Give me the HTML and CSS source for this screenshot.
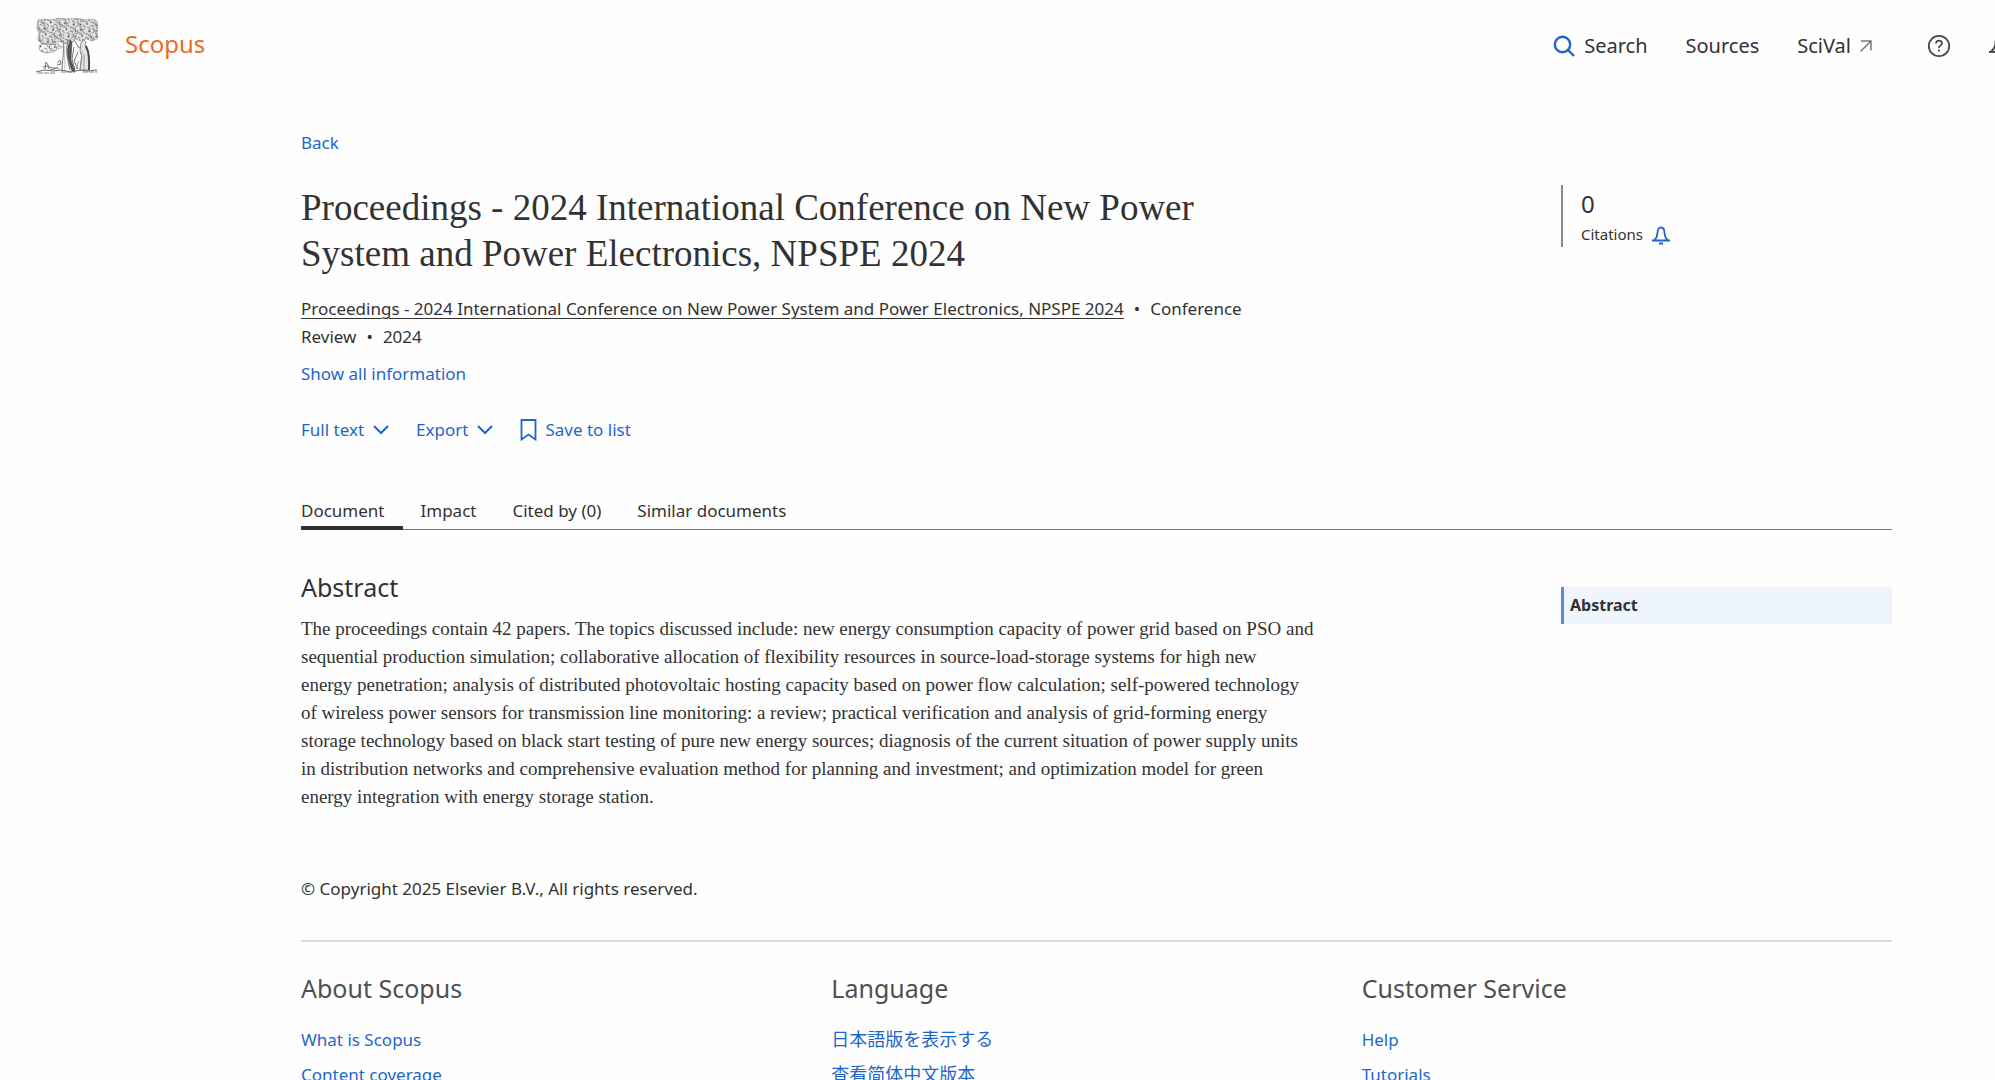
FILE: index.html
```
<!DOCTYPE html>
<html lang="en">
<head>
<meta charset="utf-8">
<meta name="viewport" content="width=device-width, initial-scale=1">
<title>Scopus - Document details</title>
<link rel="stylesheet" href="styles.css">
</head>
<body>
<header class="topbar">
  <a class="brand" href="#">
    <svg class="brand-tree" viewBox="0 0 62 56" fill="none" stroke="#4a4a4a" aria-hidden="true">
      <defs>
        <pattern id="leaves" width="17" height="13" patternUnits="userSpaceOnUse" patternTransform="rotate(23)">
          <path d="M0 2q2-2 3 0t-1 3M5 1q3-1 3 1t-2 3M1 9q1-3 3-1t3 0M9 4q2-2 3 1t3-1M5 6l2 2M2 12q2-2 4 0M12 1q2 0 3 2M9 8q0 3 3 2t3 1M15 7l2 1M8 12l2-1M13 6l1 2" stroke="#666" stroke-width=".9"/>
          <path d="M3 4l1 1M7 10l1-1M11 6l1 1M15 11l1 1M9 1l1 1" stroke="#333" stroke-width="1.2"/>
        </pattern>
      </defs>
      <path d="M2 2l6-1 7 1 8-2 8 1 9-1 9 2 7-1 5 2 1 6-1 5 1 6-5 3-7-2-6 2-5-2-6 2-3 3-3-2-6 0-5 3-4-2-6 1-4-4 1-6-2-6z" fill="#e2e2e2" stroke="none"/>
      <path d="M2 2l6-1 7 1 8-2 8 1 9-1 9 2 7-1 5 2 1 6-1 5 1 6-5 3-7-2-6 2-5-2-6 2-3 3-3-2-6 0-5 3-4-2-6 1-4-4 1-6-2-6z" fill="url(#leaves)" stroke="#777" stroke-width=".7" stroke-dasharray="2 1"/>
      <path d="M3 28l4-3 7 2 8-1 4 3-4 2-5 3-7 1-6-2z" fill="url(#leaves)" stroke="#777" stroke-width=".6"/>
      <path d="M27 22q1 8 0 17t-1 14M32 22q-2 8-1 15t3 15" stroke="#666" stroke-width=".9"/>
      <path d="M29 25q-1 12 0 27M22 27l4 4" stroke="#aaa" stroke-width=".7"/>
      <path d="M34 22q-4 9-2 18t4 13l3 0-4-11 1-18z" fill="#555" stroke-width=".5"/>
      <path d="M36 24q3-3 4 1l3 5 3-1M38 29l-2 12 3 11M42 34l-4 9 4 8" stroke="#666" stroke-width=".9"/>
      <path d="M45 25q2-5 5-1l-1 4 3 7 1 17h-9l2-13-2-6z" fill="#e4e4e4" stroke="#777" stroke-width=".8"/>
      <path d="M50 28q4 7 3 24" stroke="#444" stroke-width="1.800"/>
      <path d="M46 33l-2 18M48 36l0 16M43 43l-3 8" stroke="#888" stroke-width=".8"/>
      <path d="M21 45l3-3 1 4-4 1M9 51l1-7 2 3 1 4M7 49l4-1 5 2 7 0M14 52l7-2" stroke="#666" stroke-width=".9"/>
      <path d="M0 54l8-2 9 1 8-1 10 2 9-2 8 1 9-1" stroke="#666" stroke-width="1"/>
      <path d="M2 55h17M25 54h14M47 54h14" stroke="#777" stroke-width=".9" stroke-dasharray="5 1"/>
    </svg>
    <span>Scopus</span>
  </a>
  <nav class="topnav" aria-label="Main">
    <a href="#" class="nav-search">
      <svg viewBox="0 0 22 22" width="22" height="22" fill="none" stroke="#1f66cc" stroke-width="2.400" aria-hidden="true"><circle cx="9.500" cy="9.500" r="7.700"/><path d="M15 15l6 6"/></svg>
      Search</a>
    <a href="#">Sources</a>
    <a href="#" class="nav-ext">SciVal
      <svg viewBox="0 0 14 14" width="14" height="14" fill="none" stroke="#777" stroke-width="1.500" aria-hidden="true"><path d="M2 2h10v9.500M12 2L1.500 12.500"/></svg></a>
    <button type="button" class="icon-btn help" aria-label="Help">
      <svg viewBox="0 0 24 24" width="24" height="24" fill="none" stroke="#4a4a4a" stroke-width="1.800" aria-hidden="true"><circle cx="12" cy="12" r="10.200"/><path d="M9 9.600q0-3 3-3t3 2.700q0 1.500-1.700 2.500t-1.300 2.200M12 15.500v2"/></svg>
    </button>
    <button type="button" class="icon-btn" aria-label="Notifications">
      <svg viewBox="0 0 24 24" width="24" height="24" fill="none" stroke="#4a4a4a" stroke-width="2" aria-hidden="true"><path d="M0 18h24M2 17.500q4-3 4.500-8 0-6 5.500-6t5.500 6q.5 5 4.500 8M10 21h4"/></svg>
    </button>
  </nav>
</header>

<main class="page">
  <a class="back" href="#">Back</a>

  <section class="split">
    <div class="headline">
      <h1>Proceedings - 2024 International Conference on New Power System and Power Electronics, NPSPE 2024</h1>
      <p class="meta"><a href="#">Proceedings - 2024 International Conference on New Power System and Power Electronics, NPSPE 2024</a><span class="dot">•</span>Conference Review<span class="dot">•</span>2024</p>
      <button type="button" class="link-btn">Show all information</button>
    </div>
    <aside class="metric">
      <span class="metric-value">0</span>
      <span class="metric-label">Citations
        <button type="button" class="icon-btn" aria-label="Set citation alert">
          <svg viewBox="0 0 20 20" width="20" height="20" fill="none" stroke="#1f66cc" stroke-width="1.800" aria-hidden="true"><path d="M1 15.500h18M3.500 15q2.500-2 3-7 0-5.500 3.500-5.500t3.500 5.500q.5 5 3 7M8 18.500h4"/></svg>
        </button>
      </span>
    </aside>
  </section>

  <div class="actions">
    <button type="button" class="link-btn">Full text
      <svg viewBox="0 0 16 10" width="16" height="10" fill="none" stroke="currentColor" stroke-width="2" aria-hidden="true"><path d="M1 1l7 7 7-7"/></svg></button>
    <button type="button" class="link-btn">Export
      <svg viewBox="0 0 16 10" width="16" height="10" fill="none" stroke="currentColor" stroke-width="2" aria-hidden="true"><path d="M1 1l7 7 7-7"/></svg></button>
    <button type="button" class="link-btn save">
      <svg viewBox="0 0 17 22" width="17" height="22" fill="none" stroke="currentColor" stroke-width="1.800" aria-hidden="true"><path d="M1.500 1h14v19.500l-7-5-7 5z"/></svg>
      Save to list</button>
  </div>

  <nav class="tabs" aria-label="Document sections">
    <a href="#" class="active" aria-current="page">Document</a>
    <a href="#">Impact</a>
    <a href="#">Cited by (0)</a>
    <a href="#">Similar documents</a>
  </nav>

  <section class="split body">
    <div>
      <h2>Abstract</h2>
      <p class="abstract">The proceedings contain 42 papers. The topics discussed include: new energy consumption capacity of power grid based on PSO and<br>
        sequential production simulation; collaborative allocation of flexibility resources in source-load-storage systems for high new<br>
        energy penetration; analysis of distributed photovoltaic hosting capacity based on power flow calculation; self-powered technology<br>
        of wireless power sensors for transmission line monitoring: a review; practical verification and analysis of grid-forming energy<br>
        storage technology based on black start testing of pure new energy sources; diagnosis of the current situation of power supply units<br>
        in distribution networks and comprehensive evaluation method for planning and investment; and optimization model for green<br>
        energy integration with energy storage station.</p>
    </div>
    <nav class="toc" aria-label="On this page"><a href="#">Abstract</a></nav>
  </section>

  <p class="copyright">© Copyright 2025 Elsevier B.V., All rights reserved.</p>

  <footer class="footer">
    <section>
      <h2>About Scopus</h2>
      <ul><li><a href="#">What is Scopus</a></li><li><a href="#">Content coverage</a></li></ul>
    </section>
    <section>
      <h2>Language</h2>
      <ul class="languages"><li><a href="#" lang="ja">日本語版を表示する</a></li><li><a href="#" lang="zh-Hans">查看简体中文版本</a></li></ul>
    </section>
    <section>
      <h2>Customer Service</h2>
      <ul><li><a href="#">Help</a></li><li><a href="#">Tutorials</a></li></ul>
    </section>
  </footer>
</main>
</body>
</html>
```
FILE: styles.css
```
:root {
  --ink: #323232;
  --soft: #505050;
  --link: #1f66cc;
  --sans: "Noto Sans", "Noto Sans CJK JP", sans-serif;
  --serif: "Liberation Serif", serif;
}

* { box-sizing: border-box; }

body {
  margin: 0;
  background: #fefefe;
  color: var(--ink);
  font: 17px/28px var(--sans);
}

a { color: var(--link); text-decoration: none; }
h1, h2, p, ul { margin: 0; padding: 0; font-weight: 400; }
ul { list-style: none; }
svg { display: block; flex: none; }

button {
  padding: 0;
  border: 0;
  background: none;
  color: inherit;
  font: inherit;
  cursor: pointer;
}

.topbar {
  display: flex;
  justify-content: space-between;
  align-items: center;
  height: 92px;
  padding-left: 36px;
  overflow: hidden;
}

.brand {
  display: flex;
  align-items: center;
  gap: 27px;
  color: #eb6b1f;
  font-size: 24px;
}
.brand span { padding-bottom: 4px; }
.brand-tree { width: 62px; height: 56px; }

.topnav {
  display: flex;
  align-items: center;
  gap: 38px;
  margin-right: -18px;
  font-size: 20px;
}
.topnav a { display: flex; align-items: center; color: var(--ink); }
.nav-search { gap: 9px; }
.nav-ext { gap: 8px; }
.topnav .help { margin-left: 16px; }

.page { padding: 37px 103px 0 301px; }

.back { display: block; }

.split {
  display: grid;
  grid-template-columns: minmax(0, 1fr) 331px;
}

.headline { max-width: 960px; padding-top: 28px; }
h1 {
  font: 37px/46px var(--serif);
}
.meta { margin-top: 18px; }
.meta a {
  color: inherit;
  text-decoration: underline 1px;
  text-underline-offset: 3px;
}
.dot { margin: 0 10px; }

.link-btn {
  display: flex;
  align-items: center;
  gap: 9px;
  color: var(--link);
}
.headline .link-btn { margin-top: 9px; }

.metric {
  display: flex;
  flex-direction: column;
  align-self: start;
  margin-top: 28px;
  padding-left: 18px;
  border-left: 2px solid #8c8c8c;
}
.metric-value { font-size: 24px; line-height: 37px; }
.metric-label {
  display: flex;
  align-items: center;
  gap: 8px;
  font-size: 15px;
  line-height: 25px;
}

.actions {
  display: flex;
  gap: 27px;
  margin-top: 28px;
}
.save { gap: 8px; }

.tabs {
  display: flex;
  margin-top: 48px;
  border-bottom: 1px solid #777;
}
.tabs a {
  margin-bottom: -1px;
  padding: 5px 18px 1px;
  border-bottom: 4px solid transparent;
  color: var(--ink);
}
.tabs a:first-child { padding-left: 0; }
.tabs .active { border-color: #2e2e2e; }

.body { padding-top: 39px; }
h2 { font-size: 25px; line-height: 36px; }
.abstract {
  margin-top: 10px;
  font: 19px/28px var(--serif);
}

.toc { padding-top: 18px; }
.toc a {
  display: block;
  padding: 4px 6px 5px;
  border-left: 3px solid #5b8bd9;
  background: #eff5fd;
  color: var(--ink);
  font-size: 16px;
  font-weight: 700;
}

.copyright { margin-top: 64px; }

.footer {
  display: grid;
  grid-template-columns: repeat(3, 1fr);
  margin-top: 37px;
  padding-top: 28px;
  border-top: 2px solid #dcdcdc;
}
.footer h2 { color: var(--soft); }
.footer ul { margin-top: 16px; }
.footer li { line-height: 35px; }
.languages { font-size: 18px; }
```
